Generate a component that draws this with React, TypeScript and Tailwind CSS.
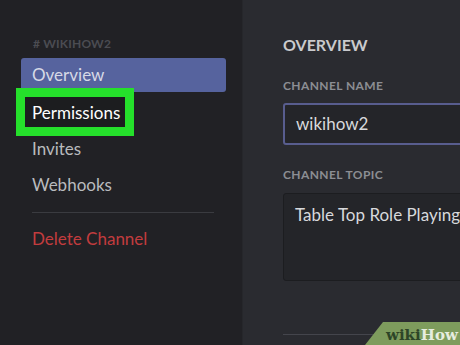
import React from "react";

export default function App() {
  const font = { fontFamily: 'Lato, "Noto Sans", sans-serif' };
  return (
    <div className="w-[460px] h-[345px] flex overflow-hidden relative" style={font}>
      <div className="w-[242px] h-full bg-[#212125] pl-[21px] flex flex-col">
        <div className="mt-[36px] h-[16px] pl-[12px] text-[12px] leading-[16px] font-bold text-[#4b4c52] tracking-[0.2px]">
          # WIKIHOW2
        </div>
        <div className="mt-[6px] h-[34px] w-[205px] rounded-[3px] bg-[#56639e] pl-[11px] flex items-center text-[17px] text-[#d6d9e6]">
          Overview
        </div>
        <div className="relative mt-[3px] h-[36px] pl-[11px] flex items-center text-[17px] text-white">
          <div className="absolute left-[-5px] top-[-7px] w-[118px] h-[48px] border-[9px] border-[#25e02b] bg-[#1c1d1f]" />
          <span className="relative">Permissions</span>
        </div>
        <div className="h-[36px] pl-[11px] flex items-center text-[17px] text-[#b9bbbe]">Invites</div>
        <div className="h-[36px] pl-[11px] flex items-center text-[17px] text-[#b9bbbe]">Webhooks</div>
        <div className="mt-[9px] ml-[11px] w-[182px] h-px bg-[#3a3b40]" />
        <div className="mt-[8px] h-[36px] pl-[11px] flex items-center text-[17px] text-[#c23c3e]">Delete Channel</div>
      </div>
      <div className="flex-1 h-full bg-[#2a2b30] border-l border-[#26272b] pl-[40px] flex flex-col overflow-hidden">
        <div className="mt-[35px] h-[20px] text-[16px] leading-[20px] font-bold text-[#c9cacd]">OVERVIEW</div>
        <div className="mt-[23px] h-[16px] text-[12px] leading-[16px] font-bold text-[#8c8e93] tracking-[0.4px]">CHANNEL NAME</div>
        <div className="mt-[9px] h-[42px] w-[220px] shrink-0 rounded-[3px] border-2 border-[#585d8e] bg-[#242529] pl-[11px] flex items-center text-[17px] text-[#d8d9dc]">
          wikihow2
        </div>
        <div className="mt-[22px] h-[16px] text-[12px] leading-[16px] font-bold text-[#8c8e93] tracking-[0.4px]">CHANNEL TOPIC</div>
        <div className="mt-[10px] h-[88px] w-[220px] shrink-0 rounded-[3px] border border-[#1c1d20] bg-[#242529] pl-[11px] pt-[9px] text-[17px] leading-[24px] text-[#d8d9dc] whitespace-nowrap">
          Table Top Role Playing
        </div>
        <div className="mt-[53px] w-[120px] h-px bg-[#44454c]" />
      </div>
      <svg className="absolute right-0 bottom-0" width="95" height="23" viewBox="0 0 95 23">
        <polygon points="18,0 95,0 95,23 0,23" fill="#7e9c5d" />
        <text x="21" y="18" fontFamily='"DejaVu Serif", serif' fontWeight="bold" fontSize="15" fill="#2d4527">
          wiki<tspan fill="#e6ecdf">How</tspan>
        </text>
      </svg>
    </div>
  );
}
